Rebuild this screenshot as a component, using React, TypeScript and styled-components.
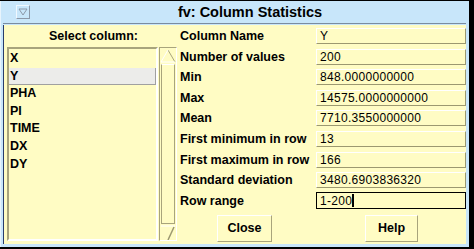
import React from 'react';
import styled, { createGlobalStyle } from 'styled-components';

const columns = ['X', 'Y', 'PHA', 'PI', 'TIME', 'DX', 'DY'];

const stats = [
  { label: 'Column Name', value: 'Y' },
  { label: 'Number of values', value: '200' },
  { label: 'Min', value: '848.0000000000' },
  { label: 'Max', value: '14575.0000000000' },
  { label: 'Mean', value: '7710.3550000000' },
  { label: 'First minimum in row', value: '13' },
  { label: 'First maximum in row', value: '166' },
  { label: 'Standard deviation', value: '3480.6903836320' },
];

const GlobalStyle = createGlobalStyle`
  html, body {
    margin: 0;
    background: #000;
  }
  body {
    font-family: "Liberation Sans", Arial, sans-serif;
    color: #000;
  }
`;

export default function App() {
  return (
    <>
      <GlobalStyle />
      <Frame>
        <TitleBar>
          <MenuButton>
            <svg width="10" height="8" viewBox="0 0 10 8">
              <path d="M1 1 L9 1 L5 7 Z" fill="none" stroke="#8c98a8" strokeWidth="1" />
            </svg>
          </MenuButton>
          <Title>fv: Column Statistics</Title>
        </TitleBar>
        <Content>
          <LeftPanel>
            <Heading>Select column:</Heading>
            <ListArea>
              <ListBox>
                {columns.map((c) => (
                  <ListItem key={c} selected={c === 'Y'}>
                    {c}
                  </ListItem>
                ))}
              </ListBox>
              <ScrollBar>
                <Arrow>
                  <svg width="16" height="14" viewBox="0 0 16 14">
                    <path d="M8 1 L15 13" stroke="#a8a47c" strokeWidth="1" fill="none" />
                    <path d="M8 1 L1 13 L15 13" stroke="#fff" strokeWidth="1" fill="none" />
                  </svg>
                </Arrow>
                <Thumb />
                <Arrow>
                  <svg width="16" height="16" viewBox="0 0 16 16">
                    <path d="M1 1 L15 1" stroke="#fff" strokeWidth="1" fill="none" />
                    <path d="M14 2 L8 15" stroke="#9c9870" strokeWidth="1.5" fill="none" />
                  </svg>
                </Arrow>
              </ScrollBar>
            </ListArea>
          </LeftPanel>
          <RightPanel>
            <Form>
              {stats.map((s) => (
                <React.Fragment key={s.label}>
                  <Label>{s.label}</Label>
                  <Field>{s.value}</Field>
                </React.Fragment>
              ))}
              <Label>Row range</Label>
              <Field focused>
                1-200
                <Caret />
              </Field>
            </Form>
            <ButtonRow>
              <Button width={55}>Close</Button>
              <Button width={53}>Help</Button>
            </ButtonRow>
          </RightPanel>
        </Content>
      </Frame>
    </>
  );
}

const Frame = styled.div`
  width: 469px;
  height: 246px;
  margin-top: 1px;
  background: #c8e6fa;
  display: flex;
  flex-direction: column;
  box-sizing: border-box;
  padding: 0 3px 3px 2px;
  border-left: 1px solid #e8f4fc;
`;

const TitleBar = styled.div`
  height: 22px;
  display: flex;
  align-items: center;
  border-bottom: 1px solid #7a8ca0;
`;

const MenuButton = styled.div`
  width: 14px;
  height: 14px;
  margin-left: 13px;
  box-sizing: border-box;
  border: 1px solid #8c98a8;
  border-top-color: #f0f8ff;
  border-left-color: #f0f8ff;
  display: flex;
  align-items: center;
  justify-content: center;
`;

const Title = styled.div`
  flex: 1;
  text-align: center;
  font-weight: bold;
  font-size: 14.5px;
  padding-left: 4px;
`;

const Content = styled.div`
  flex: 1;
  margin-top: 1px;
  background: #fffcc4;
  border-left: 1px solid #283c6c;
  display: grid;
  grid-template-columns: 176px 1fr;
`;

const LeftPanel = styled.div`
  display: flex;
  flex-direction: column;
  padding-left: 3px;
`;

const Heading = styled.div`
  height: 22px;
  display: flex;
  align-items: center;
  justify-content: center;
  font-weight: bold;
  font-size: 12.5px;
`;

const ListArea = styled.div`
  display: flex;
  gap: 1px;
  height: 194px;
`;

const ListBox = styled.div`
  width: 151px;
  box-sizing: border-box;
  border: 2px solid #fff;
  border-top-color: #a8a47c;
  border-left-color: #a8a47c;
  padding-top: 1px;
  display: flex;
  flex-direction: column;
`;

const ListItem = styled.div<{ selected?: boolean }>`
  height: 17.6px;
  line-height: 17px;
  padding-left: 1px;
  box-sizing: border-box;
  font-weight: bold;
  font-size: 12.5px;
  background: ${(p) => (p.selected ? '#ececea' : 'transparent')};
  border-bottom: 1px solid ${(p) => (p.selected ? '#a0a0a0' : 'transparent')};
  border-right: 1px solid ${(p) => (p.selected ? '#a0a0a0' : 'transparent')};
`;

const ScrollBar = styled.div`
  width: 18px;
  box-sizing: border-box;
  border: 1px solid #fff;
  border-top-color: #a8a47c;
  border-left-color: #a8a47c;
  display: flex;
  flex-direction: column;
`;

const Arrow = styled.div`
  height: 15px;
  display: flex;
  align-items: center;
  justify-content: center;
  overflow: hidden;
`;

const Thumb = styled.div`
  flex: 1;
  margin: 1px 1px;
  box-sizing: border-box;
  border: 1px solid #a8a47c;
  border-top-color: #fff;
  border-left-color: #a8a47c;
`;

const RightPanel = styled.div`
  display: flex;
  flex-direction: column;
  padding-top: 3px;
`;

const Form = styled.div`
  display: grid;
  grid-template-columns: 136px 150px;
  grid-auto-rows: 16px;
  row-gap: 4.6px;
  align-items: center;
`;

const Label = styled.div`
  font-weight: bold;
  font-size: 12.5px;
  white-space: nowrap;
`;

const Field = styled.div<{ focused?: boolean }>`
  height: 16px;
  box-sizing: border-box;
  display: flex;
  align-items: center;
  padding-left: 3px;
  font-size: 12px;
  letter-spacing: 0.3px;
  border: 1px solid #9c9870;
  border-top-color: #fff;
  border-left-color: #fff;
  ${(p) =>
    p.focused &&
    `
    height: 17px;
    border: 1.5px solid #000;
  `}
`;

const Caret = styled.span`
  width: 2px;
  height: 13px;
  background: #000;
`;

const ButtonRow = styled.div`
  display: flex;
  gap: 93px;
  padding: 6px 0 0 37px;
`;

const Button = styled.div<{ width: number }>`
  width: ${(p) => p.width}px;
  height: 27px;
  box-sizing: border-box;
  display: flex;
  align-items: center;
  justify-content: center;
  font-weight: bold;
  font-size: 12.5px;
  border: 1px solid #a8a47c;
  border-top-color: #fff;
  border-left-color: #fff;
`;
